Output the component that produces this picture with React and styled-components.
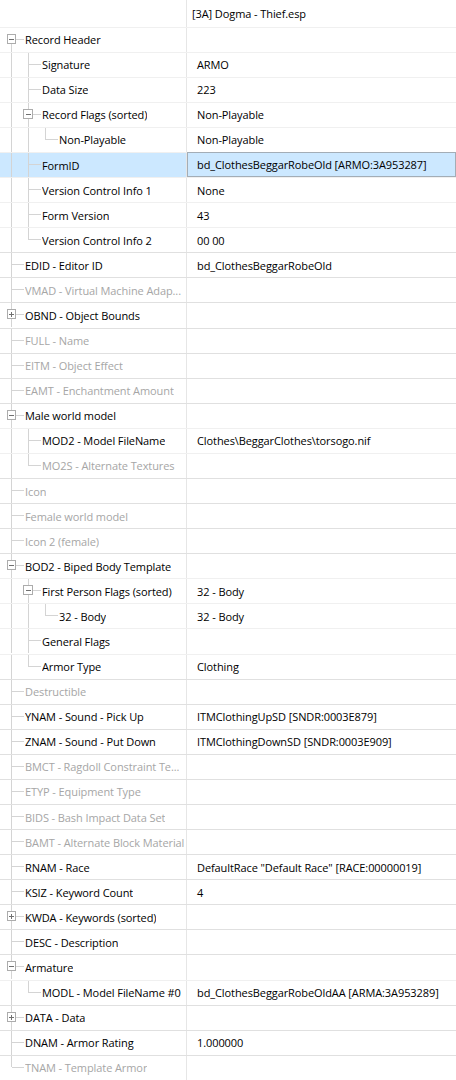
import React from 'react';
import styled, { createGlobalStyle, css } from 'styled-components';

const GlobalStyle = createGlobalStyle`
  html, body {
    margin: 0;
    padding: 0;
    background: #ffffff;
  }
  body {
    font-family: "Open Sans", "Noto Sans", "Liberation Sans", sans-serif;
    font-size: 11px;
    letter-spacing: -0.09px;
    color: #000000;
  }
`;

const ROW_H = 25.08;
const NAME_W = 187;
const LINE = '#d4d4d4';

// depth, name, value, expander, disabled, selected
const rows = [
  [0, 'Record Header', '', '-'],
  [1, 'Signature', 'ARMO'],
  [1, 'Data Size', '223'],
  [1, 'Record Flags (sorted)', 'Non-Playable', '-'],
  [2, 'Non-Playable', 'Non-Playable'],
  [1, 'FormID', 'bd_ClothesBeggarRobeOld [ARMO:3A953287]', null, false, true],
  [1, 'Version Control Info 1', 'None'],
  [1, 'Form Version', '43'],
  [1, 'Version Control Info 2', '00 00'],
  [0, 'EDID - Editor ID', 'bd_ClothesBeggarRobeOld'],
  [0, 'VMAD - Virtual Machine Adap...', '', null, true],
  [0, 'OBND - Object Bounds', '', '+'],
  [0, 'FULL - Name', '', null, true],
  [0, 'EITM - Object Effect', '', null, true],
  [0, 'EAMT - Enchantment Amount', '', null, true],
  [0, 'Male world model', '', '-'],
  [1, 'MOD2 - Model FileName', 'Clothes\\BeggarClothes\\torsogo.nif'],
  [1, 'MO2S - Alternate Textures', '', null, true],
  [0, 'Icon', '', null, true],
  [0, 'Female world model', '', null, true],
  [0, 'Icon 2 (female)', '', null, true],
  [0, 'BOD2 - Biped Body Template', '', '-'],
  [1, 'First Person Flags (sorted)', '32 - Body', '-'],
  [2, '32 - Body', '32 - Body'],
  [1, 'General Flags', ''],
  [1, 'Armor Type', 'Clothing'],
  [0, 'Destructible', '', null, true],
  [0, 'YNAM - Sound - Pick Up', 'ITMClothingUpSD [SNDR:0003E879]'],
  [0, 'ZNAM - Sound - Put Down', 'ITMClothingDownSD [SNDR:0003E909]'],
  [0, 'BMCT - Ragdoll Constraint Te...', '', null, true],
  [0, 'ETYP - Equipment Type', '', null, true],
  [0, 'BIDS - Bash Impact Data Set', '', null, true],
  [0, 'BAMT - Alternate Block Material', '', null, true],
  [0, 'RNAM - Race', 'DefaultRace "Default Race" [RACE:00000019]'],
  [0, 'KSIZ - Keyword Count', '4'],
  [0, 'KWDA - Keywords (sorted)', '', '+'],
  [0, 'DESC - Description', ''],
  [0, 'Armature', '', '-'],
  [1, 'MODL - Model FileName #0', 'bd_ClothesBeggarRobeOldAA [ARMA:3A953289]'],
  [0, 'DATA - Data', '', '+'],
  [0, 'DNAM - Armor Rating', '1.000000'],
  [0, 'TNAM - Template Armor', '', null, true],
].map(([depth, name, value, expander = null, disabled = false, selected = false]) => ({
  depth, name, value, expander, disabled, selected,
}));

// does the row at i have a later sibling at the same depth?
const hasNext = (i) => {
  const d = rows[i].depth;
  for (let j = i + 1; j < rows.length; j++) {
    if (rows[j].depth < d) return false;
    if (rows[j].depth === d) return true;
  }
  return false;
};

const ancestorAt = (i, level) => {
  for (let j = i - 1; j >= 0; j--) {
    if (rows[j].depth === level) return j;
  }
  return -1;
};

const Table = styled.div`
  width: 456px;
  height: 1080px;
  overflow: hidden;
`;

const HeaderRow = styled.div`
  display: grid;
  grid-template-columns: ${NAME_W}px 1fr;
  height: 26.6px;
`;

const HeaderBlank = styled.div`
  border-right: 1px solid #e6e6e6;
`;

const HeaderTitle = styled.div`
  display: flex;
  align-items: center;
  padding-left: 5px;
  white-space: nowrap;
`;

const Row = styled.div`
  display: grid;
  grid-template-columns: ${NAME_W}px 1fr;
  height: ${ROW_H}px;
  box-sizing: border-box;
  border-top: 1px solid ${(p) => (p.$strong ? '#e0e0e0' : '#f0f0f0')};
  background: ${(p) => (p.$selected ? '#cce8ff' : 'transparent')};
`;

const NameCell = styled.div`
  display: flex;
  align-items: center;
  border-right: 1px solid #e6e6e6;
  overflow: hidden;
  white-space: nowrap;
  color: ${(p) => (p.$disabled ? '#a6a6a6' : '#000000')};
`;

const Guides = styled.svg`
  flex: none;
  height: ${ROW_H}px;
  margin-top: -1px;
  shape-rendering: crispEdges;
`;

const Label = styled.span`
  overflow: hidden;
`;

const ValueCell = styled.div`
  display: flex;
  align-items: center;
  padding-left: 10px;
  white-space: nowrap;
  overflow: hidden;
  ${(p) =>
    p.$selected &&
    css`
      box-shadow: inset 0 0 0 1px #a3adb6;
      margin-top: -1px;
    `}
`;

const TreeGuides = ({ index }) => {
  const row = rows[index];
  const d = row.depth;
  const width = 25 + 17 * d;
  const cy = 12.5;
  const h = ROW_H;
  const lines = [];

  for (let l = 0; l < d; l++) {
    const a = ancestorAt(index, l);
    if (a >= 0 && hasNext(a)) {
      const x = 11.5 + 17 * l;
      lines.push(<line key={`a${l}`} x1={x} y1={0} x2={x} y2={h} stroke={LINE} />);
    }
  }

  const x = 11.5 + 17 * d;
  const top = index === 0 ? cy : 0;
  const bottom = hasNext(index) ? h : cy;
  lines.push(<line key="v" x1={x} y1={top} x2={x} y2={bottom} stroke={LINE} />);
  lines.push(<line key="h" x1={x} y1={cy} x2={x + 13} y2={cy} stroke={LINE} />);

  return (
    <Guides width={width} viewBox={`0 0 ${width} ${h}`}>
      {lines}
      {row.expander && (
        <g>
          <rect x={x - 4.5} y={cy - 4.5} width={9} height={9} fill="#ffffff" stroke="#acacac" />
          <line x1={x - 2.5} y1={cy} x2={x + 3} y2={cy} stroke="#707070" />
          {row.expander === '+' && (
            <line x1={x} y1={cy - 2.5} x2={x} y2={cy + 3} stroke="#707070" />
          )}
        </g>
      )}
    </Guides>
  );
};

export default function App() {
  return (
    <>
      <GlobalStyle />
      <Table>
        <HeaderRow>
          <HeaderBlank />
          <HeaderTitle>[3A] Dogma - Thief.esp</HeaderTitle>
        </HeaderRow>
        {rows.map((row, i) => (
          <Row key={i} $selected={row.selected} $strong={i > 0 && row.depth === 0}>
            <NameCell $disabled={row.disabled}>
              <TreeGuides index={i} />
              <Label>{row.name}</Label>
            </NameCell>
            <ValueCell $selected={row.selected}>{row.value}</ValueCell>
          </Row>
        ))}
      </Table>
    </>
  );
}
